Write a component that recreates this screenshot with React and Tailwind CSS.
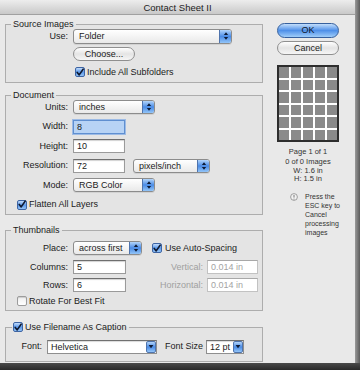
import React from "react";

function Check({ checked }) {
  return checked ? (
    <div className="w-[10px] h-[10px] rounded-[2px] border border-[#3d64a3] bg-linear-to-b from-[#c2dcfb] via-[#5a98ea] to-[#92c2f6] flex items-center justify-center shrink-0">
      <svg width="9" height="9" viewBox="0 0 9 9">
        <path d="M1.4 4.4 L3.6 7.2 L8 0.8" fill="none" stroke="#101a30" strokeWidth="1.8" strokeLinecap="round" strokeLinejoin="round" />
      </svg>
    </div>
  ) : (
    <div className="w-[10px] h-[10px] rounded-[2px] border border-[#9c9c9c] bg-linear-to-b from-[#efefef] to-[#ffffff] shadow-[inset_0_1px_1px_rgba(0,0,0,0.15)] shrink-0" />
  );
}

function Arrows() {
  return (
    <svg width="6" height="10" viewBox="0 0 6 10">
      <path d="M0.8 4 L3 1.2 L5.2 4 Z" fill="#0e1c36" />
      <path d="M0.8 6 L3 8.8 L5.2 6 Z" fill="#0e1c36" />
    </svg>
  );
}

function Popup({ className, text }) {
  return (
    <div className={"flex h-[14px] rounded-[3px] border border-[#8c8c8c] bg-linear-to-b from-[#ffffff] to-[#e9e9e9] shadow-[0_1px_0_rgba(0,0,0,0.08)] overflow-hidden " + className}>
      <div className="flex-1 pl-[5px] leading-[12px] whitespace-nowrap overflow-hidden">{text}</div>
      <div className="w-[12px] border-l border-[#4f74ad] bg-linear-to-b from-[#b3d5fa] via-[#4a8be5] to-[#93c5f8] flex items-center justify-center">
        <Arrows />
      </div>
    </div>
  );
}

function Combo({ className, text }) {
  return (
    <div className={"flex h-[14px] border border-[#8f8f8f] border-t-[#707070] bg-white shadow-[inset_0_1px_1px_rgba(0,0,0,0.15)] " + className}>
      <div className="flex-1 pl-[3px] leading-[12px] whitespace-nowrap overflow-hidden">{text}</div>
      <div className="w-[10px] rounded-[2px] border border-[#4f74ad] bg-linear-to-b from-[#b3d5fa] via-[#4a8be5] to-[#93c5f8] flex items-center justify-center">
        <svg width="6" height="5" viewBox="0 0 6 5">
          <path d="M0.6 1 L3 4.2 L5.4 1 Z" fill="#0e1c36" />
        </svg>
      </div>
    </div>
  );
}

function Field({ className, text, focus, disabled }) {
  const base = focus
    ? "border border-[#5f8fd0] bg-[#b7d3f5] shadow-[0_0_0_1px_rgba(110,160,230,0.6)]"
    : disabled
    ? "border border-[#c2c2c2] border-t-[#a8a8a8] bg-white text-[#a3a3a3]"
    : "border border-[#9a9a9a] border-t-[#6e6e6e] bg-white shadow-[inset_0_1px_1px_rgba(0,0,0,0.18)]";
  return (
    <div className={"h-[14px] pl-[3px] leading-[12px] " + base + " " + className}>{text}</div>
  );
}

function Label({ children, className = "" }) {
  return <div className={"w-[62px] text-right shrink-0 whitespace-nowrap " + className}>{children}</div>;
}

export default function App() {
  const cells = Array.from({ length: 30 });
  return (
    <div className="w-[360px] h-[370px] flex flex-col bg-[#3b3b3b] overflow-hidden [font-family:'Liberation_Sans',Arial,sans-serif] text-[#1b1b1b] text-[9px] leading-[11px]">
      <div className="flex h-[363px]">
        <div className="w-[355px] flex flex-col bg-[#e9e9e9]">
          <div className="h-[15px] shrink-0 bg-linear-to-b from-[#ededed] to-[#c9c9c9] border-b border-[#a0a0a0] flex items-center justify-center text-[9.5px] text-[#222]">
            Contact Sheet II
          </div>
          <div className="flex flex-1">
            {/* Left column */}
            <div className="flex flex-col pl-[5px] pt-[4.5px]">
              {/* Source Images */}
              <fieldset className="w-[258px] m-0 p-0 pb-[4px] border border-[#adadad] bg-[#e4e4e4]">
                <legend className="ml-[5px] px-[2px] leading-[9px]">Source Images</legend>
                <div className="flex items-center h-[15px]">
                  <Label>Use:</Label>
                  <Popup className="ml-[5px] w-[159px] h-[15px]" text="Folder" />
                </div>
                <div className="mt-[3px] ml-[67px] w-[62px] h-[14px] rounded-full border border-[#8f8f8f] bg-linear-to-b from-[#ffffff] via-[#e4e4e4] to-[#f6f6f6] text-center leading-[12px]">
                  Choose...
                </div>
                <div className="mt-[5.5px] ml-[69px] h-[12px] flex items-center gap-[2px]">
                  <Check checked />
                  <span>Include All Subfolders</span>
                </div>
              </fieldset>

              {/* Document */}
              <fieldset className="mt-[7.5px] w-[258px] m-0 p-0 pt-[0.5px] pb-[2px] border border-[#adadad] bg-[#e4e4e4]">
                <legend className="ml-[5px] px-[2px] leading-[9px]">Document</legend>
                <div className="flex flex-col gap-[5.5px]">
                  <div className="flex items-center h-[14px]">
                    <Label>Units:</Label>
                    <Popup className="ml-[5px] w-[82px]" text="inches" />
                  </div>
                  <div className="flex items-center h-[14px]">
                    <Label>Width:</Label>
                    <Field className="ml-[5px] w-[52px]" text="8" focus />
                  </div>
                  <div className="flex items-center h-[14px]">
                    <Label>Height:</Label>
                    <Field className="ml-[5px] w-[52px]" text="10" />
                  </div>
                  <div className="flex items-center h-[14px]">
                    <Label>Resolution:</Label>
                    <Field className="ml-[5px] w-[52px]" text="72" />
                    <Popup className="ml-[8px] w-[77px]" text="pixels/inch" />
                  </div>
                  <div className="flex items-center h-[14px]">
                    <Label>Mode:</Label>
                    <Popup className="ml-[5px] w-[82px]" text="RGB Color" />
                  </div>
                  <div className="flex items-center h-[14px] ml-[11px] gap-[2px]">
                    <Check checked />
                    <span>Flatten All Layers</span>
                  </div>
                </div>
              </fieldset>

              {/* Thumbnails */}
              <fieldset className="mt-[11px] w-[258px] m-0 p-0 pt-[6.5px] pb-[3px] border border-[#adadad] bg-[#e4e4e4]">
                <legend className="ml-[5px] px-[2px] leading-[9px]">Thumbnails</legend>
                <div className="flex items-center h-[14px]">
                  <Label>Place:</Label>
                  <Popup className="ml-[5px] w-[69px]" text="across first" />
                  <div className="ml-[10px] flex items-center gap-[3px]">
                    <Check checked />
                    <span>Use Auto-Spacing</span>
                  </div>
                </div>
                <div className="mt-[5px] flex items-center h-[14px]">
                  <Label>Columns:</Label>
                  <Field className="ml-[5px] w-[53px]" text="5" />
                  <div className="flex-1 text-right text-[#a0a0a0]">Vertical:</div>
                  <Field className="ml-[4px] mr-[4px] w-[51px]" text="0.014 in" disabled />
                </div>
                <div className="mt-[4px] flex items-center h-[14px]">
                  <Label>Rows:</Label>
                  <Field className="ml-[5px] w-[53px]" text="6" />
                  <div className="flex-1 text-right text-[#a0a0a0]">Horizontal:</div>
                  <Field className="ml-[4px] mr-[4px] w-[51px]" text="0.014 in" disabled />
                </div>
                <div className="mt-[3px] ml-[11px] h-[12px] flex items-center gap-[2px]">
                  <Check />
                  <span>Rotate For Best Fit</span>
                </div>
              </fieldset>

              {/* Caption */}
              <fieldset className="mt-[10px] w-[258px] m-0 p-0 pt-[5px] pb-[7px] border border-[#adadad] bg-[#e4e4e4]">
                <legend className="ml-[6px] px-[1px] leading-[12px]">
                  <span className="inline-flex items-center gap-[2px] h-[12px] pr-[1px]">
                    <Check checked />
                    <span>Use Filename As Caption</span>
                  </span>
                </legend>
                <div className="flex items-center h-[14px]">
                  <div className="w-[36px] text-right shrink-0">Font:</div>
                  <Combo className="ml-[5px] w-[110px]" text="Helvetica" />
                  <div className="ml-[8px] whitespace-nowrap">Font Size</div>
                  <Combo className="ml-[3px] w-[38px]" text="12 pt" />
                </div>
              </fieldset>
            </div>

            {/* Right column */}
            <div className="ml-[14px] w-[62px] pt-[8px] flex flex-col">
              <div className="h-[15px] rounded-full border border-[#36609e] bg-linear-to-b from-[#c3defb] via-[#4f90e8] to-[#9fcdf9] text-center leading-[13px] text-[#10182a]">
                OK
              </div>
              <div className="mt-[3px] h-[14px] rounded-full border border-[#8f8f8f] bg-linear-to-b from-[#ffffff] via-[#e4e4e4] to-[#f6f6f6] text-center leading-[12px]">
                Cancel
              </div>
              <div className="mt-[10px] h-[77px] border-2 border-[#2e2e2e] bg-white grid grid-cols-5 grid-rows-6 gap-[2px]">
                {cells.map((_, i) => (
                  <div key={i} className="bg-[#8a8a8a]" />
                ))}
              </div>
              <div className="mt-[5px] text-center text-[7.5px] leading-[10px] text-[#333] whitespace-nowrap">
                <div>Page 1 of 1</div>
                <div>0 of 0 Images</div>
                <div className="leading-[8px]">W: 1.6 in</div>
                <div className="leading-[8px]">H: 1.5 in</div>
              </div>
              <div className="mt-[9px] flex items-start text-[7px] leading-[9px] text-[#333]">
                <svg className="ml-[13px] mt-[0.5px] shrink-0" width="8" height="8" viewBox="0 0 8 8">
                  <circle cx="4" cy="4" r="3.4" fill="#f2f2f2" stroke="#8a8a8a" strokeWidth="0.8" />
                  <path d="M4 2 L4 4.6" stroke="#6a6a6a" strokeWidth="0.9" />
                  <circle cx="4" cy="5.9" r="0.5" fill="#6a6a6a" />
                </svg>
                <div className="ml-[7px] whitespace-nowrap">
                  <div>Press the</div>
                  <div>ESC key to</div>
                  <div>Cancel</div>
                  <div>processing</div>
                  <div>images</div>
                </div>
              </div>
            </div>
          </div>
        </div>
        <div className="flex-1 bg-linear-to-r from-[#9a9a9a] to-[#5c5c5c]" />
      </div>
      <div className="flex-1 bg-linear-to-b from-[#4a4a4a] to-[#2a2a2a]" />
    </div>
  );
}
